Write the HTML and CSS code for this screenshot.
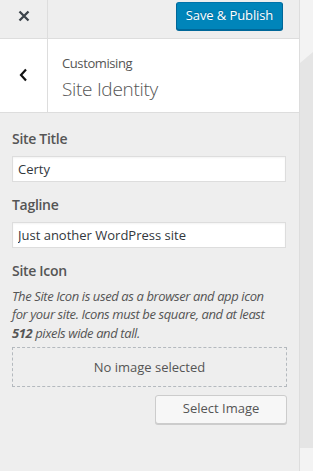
FILE: index.html
```html
<!DOCTYPE html>
<html>
<head>
<meta charset="utf-8">
<link rel="stylesheet" href="styles.css">
</head>
<body>
<div class="app">
  <div class="sidebar">
    <div class="header">
      <button class="close" aria-label="Close">
        <svg width="12" height="12" viewBox="0 0 12 12"><path d="M1.5 1.5 L10.5 10.5 M10.5 1.5 L1.5 10.5" stroke="#3c434a" stroke-width="2.3" stroke-linecap="butt"/></svg>
      </button>
      <div class="header-actions">
        <button class="primary">Save &amp; Publish</button>
      </div>
    </div>
    <div class="panel-title">
      <button class="back" aria-label="Back">
        <svg width="9" height="14" viewBox="0 0 9 14"><path d="M7 1.5 L2 7 L7 12.5" fill="none" stroke="#111" stroke-width="2.2"/></svg>
      </button>
      <div class="titles">
        <span class="crumb">Customising</span>
        <h3 class="title">Site Identity</h3>
      </div>
    </div>
    <div class="controls">
      <label class="ctl-label">Site Title</label>
      <input class="text-input" type="text" value="Certy">
      <label class="ctl-label">Tagline</label>
      <input class="text-input" type="text" value="Just another WordPress site">
      <label class="ctl-label icon-label">Site Icon</label>
      <p class="desc">The Site Icon is used as a browser and app icon<br>for your site. Icons must be square, and at least<br><strong>512</strong> pixels wide and tall.</p>
      <div class="placeholder">No image selected</div>
      <div class="actions">
        <button class="secondary">Select Image</button>
      </div>
    </div>
  </div>
  <div class="preview"><div class="preview-shape"></div></div>
</div>
</body>
</html>
```
FILE: styles.css
```css
* { box-sizing: border-box; }
html, body { margin: 0; padding: 0; }
body {
  width: 313px;
  height: 471px;
  overflow: hidden;
  font-family: "Open Sans", "Noto Sans", sans-serif;
  font-size: 13px;
  color: #555;
  background: #eee;
}
.app { display: flex; height: 471px; }
.sidebar {
  width: 300px;
  flex: none;
  background: #eee;
  border-right: 1px solid #ddd;
  display: flex;
  flex-direction: column;
}
.header {
  height: 39px;
  display: flex;
  align-items: flex-start;
  border-bottom: 1px solid #ddd;
  background: #eee;
}
button { font-family: inherit; cursor: pointer; }
.close {
  width: 48px;
  height: 38px;
  border: 0;
  border-right: 1px solid #ddd;
  background: transparent;
  padding: 0 0 6px 1px;
  display: flex;
  align-items: center;
  justify-content: center;
}
.header-actions { flex: 1; display: flex; justify-content: flex-end; padding: 2px 16px 0 0; }
.primary {
  width: 107px;
  height: 28px;
  background: #0085ba;
  border: 1px solid #0073aa;
  border-color: #0073aa #006799 #006799;
  border-radius: 3px;
  box-shadow: 0 1px 0 #006799;
  color: #fff;
  font-size: 13px;
  letter-spacing: -0.1px;
  padding: 0 0 2px;
  text-shadow: 0 -1px 1px #006799;
}
.panel-title {
  height: 74px;
  background: #fff;
  border-bottom: 1px solid #ddd;
  display: flex;
}
.back {
  width: 48px;
  border: 0;
  border-right: 1px solid #ddd;
  background: transparent;
  display: flex;
  align-items: center;
  justify-content: center;
  padding: 0 0 2px 0;
}
.titles { padding: 14px 0 0 14px; display: flex; flex-direction: column; }
.crumb { font-size: 13px; line-height: 20px; color: #555; letter-spacing: -0.4px; }
.title { margin: 3px 0 0; font-size: 19px; font-weight: 300; line-height: 26px; color: #555; letter-spacing: -0.3px; }
.controls { padding: 16px 12px 0 12px; display: flex; flex-direction: column; }
.ctl-label { font-size: 14px; font-weight: 600; line-height: 20px; color: #555; margin-bottom: 7px; display: block; letter-spacing: -0.3px; }
.text-input {
  width: 274px;
  height: 26px;
  border: 1px solid #ddd;
  background: #fff;
  box-shadow: inset 0 1px 2px rgba(0,0,0,0.05);
  font-family: inherit;
  font-size: 13px;
  color: #32373c;
  padding: 0 5px;
  margin: 0 0 13px;
  outline: none;
}
.icon-label { margin-bottom: 0; }
.desc {
  margin: 6px 0 5px;
  font-style: italic;
  font-size: 13px;
  line-height: 18.3px;
  letter-spacing: -0.4px;
  white-space: nowrap;
  color: #555;
}
.desc strong { font-weight: 700; }
.placeholder {
  height: 40px;
  border: 1px dashed #b4b9be;
  display: flex;
  align-items: center;
  justify-content: center;
  color: #555;
  font-size: 13px;
}
.actions { display: flex; justify-content: flex-end; margin-top: 8px; }
.secondary {
  width: 132px;
  height: 29px;
  background: #f7f7f7;
  border: 1px solid #ccc;
  border-radius: 3px;
  box-shadow: 0 1px 0 #ccc;
  color: #555;
  font-size: 13px;
  padding: 0 0 2px;
}
.preview { flex: 1; background: #f3f3f3; position: relative; }
.preview-shape {
  position: absolute;
  left: 0; right: 0; top: 52px; height: 396px;
  background: #e5e5e5;
  clip-path: polygon(0 11px, 100% 0, 100% 100%, 0 100%);
}
```
